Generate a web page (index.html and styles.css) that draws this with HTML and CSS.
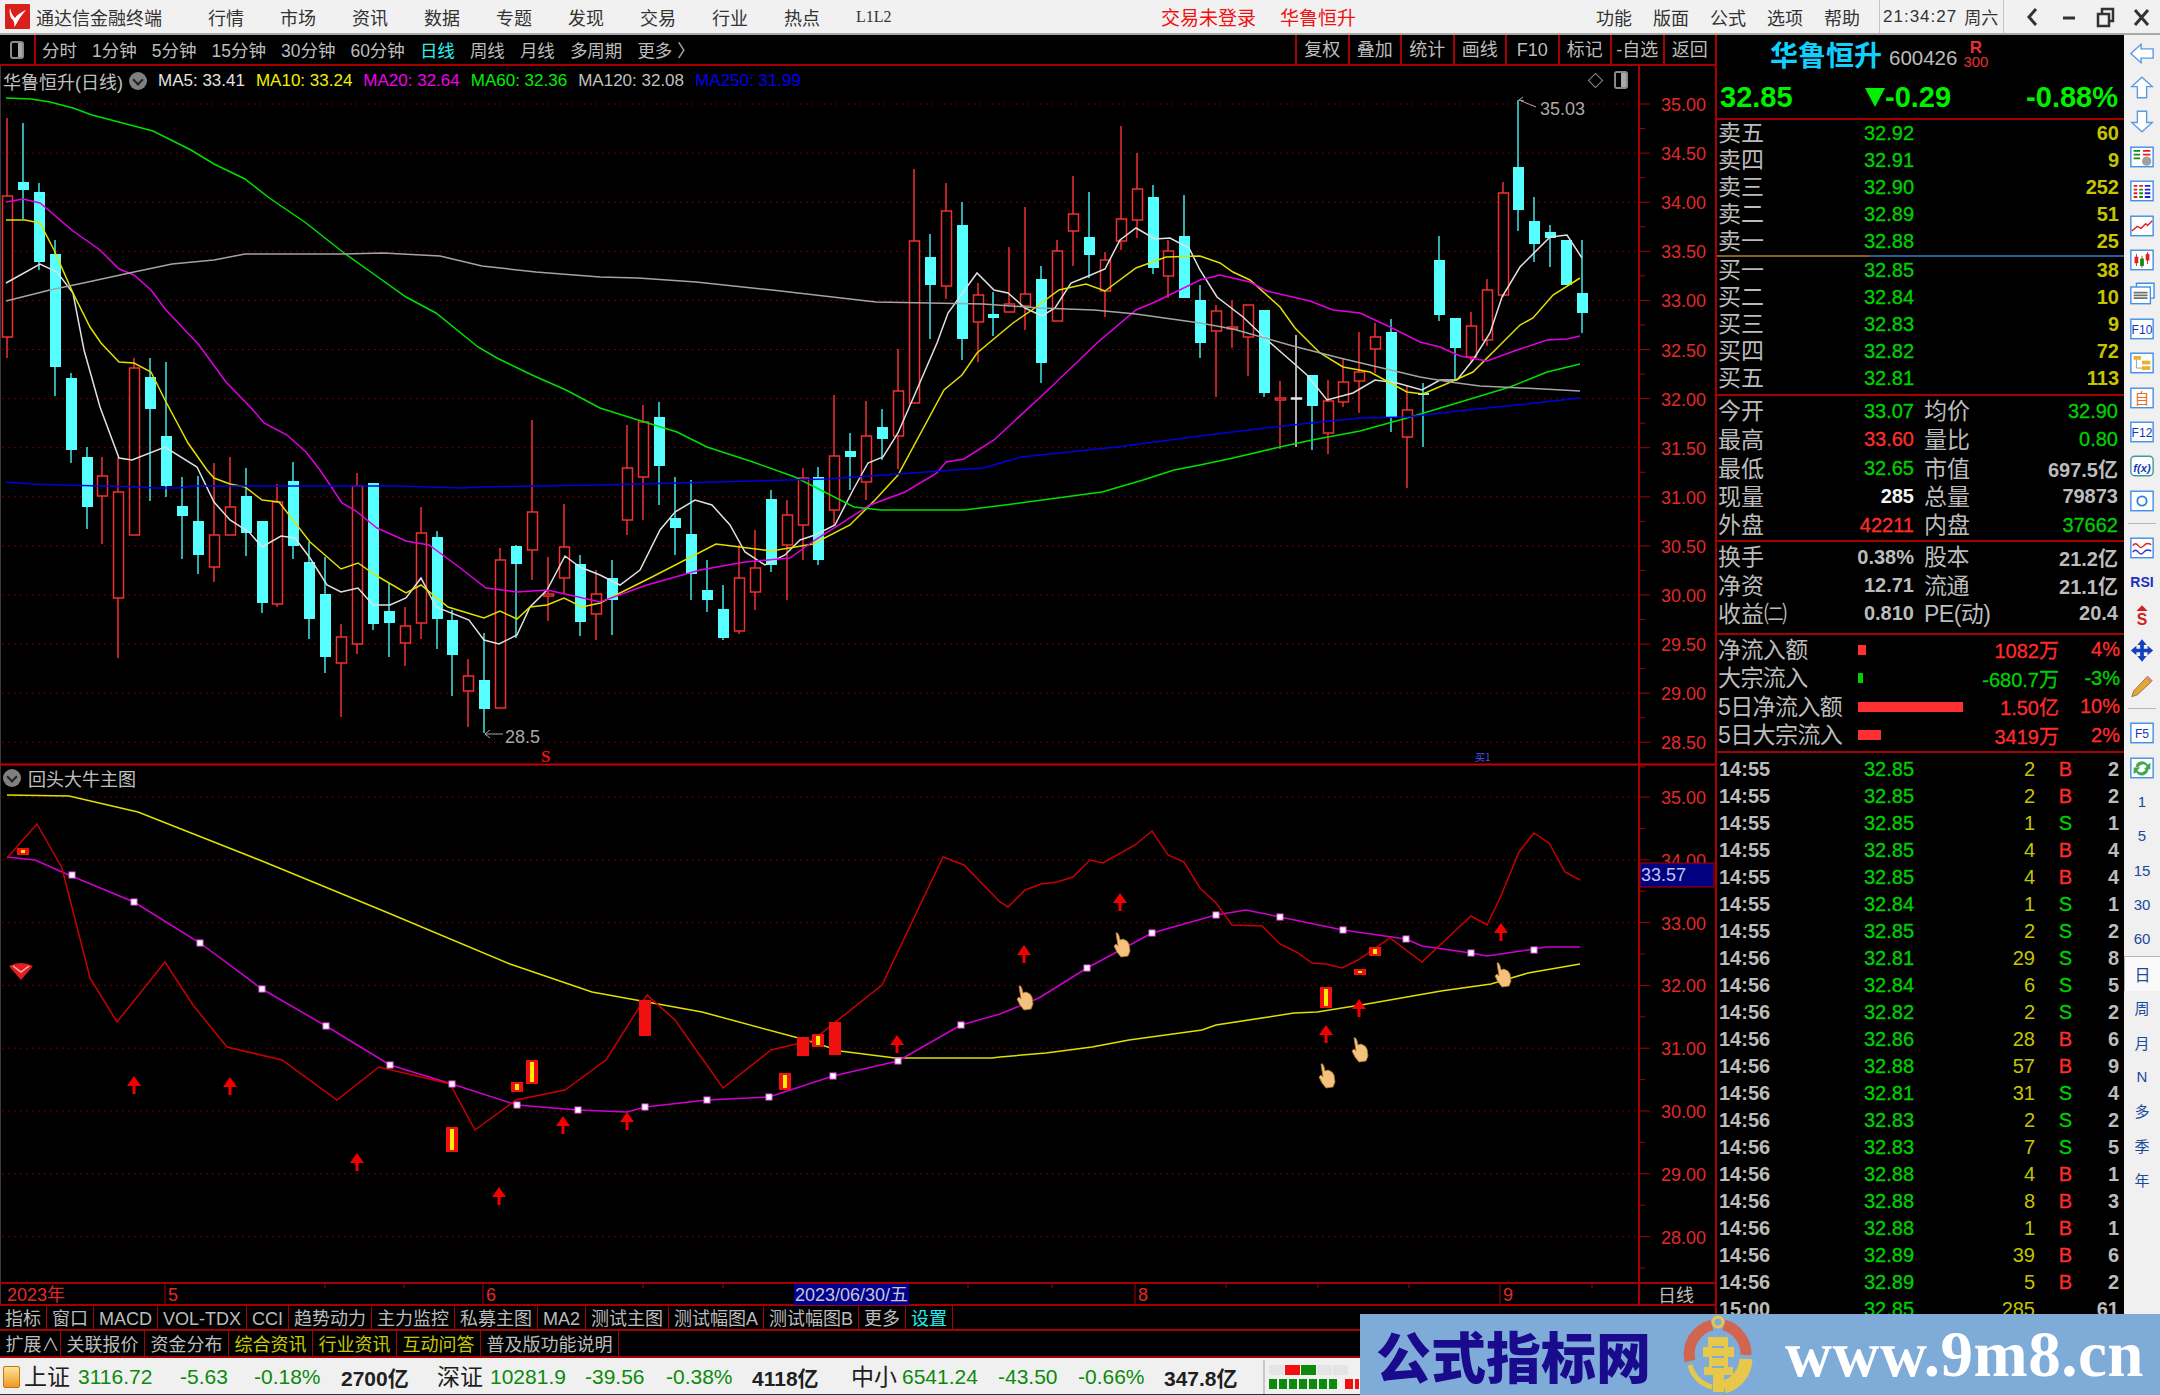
FILE: index.html
```html
<!DOCTYPE html>
<html lang="zh-CN">
<head>
  <meta charset="utf-8"/>
  <title>通达信金融终端</title>
  <link rel="stylesheet" href="styles.css">
</head>
<body>
  <header class="titlebar">
    <svg class="logo" viewBox="0 0 25 25"><rect width="25" height="25" rx="1" fill="#d8201c"/><path d="M5 4 C6 9 8 12 10 14 C12 11 16 8 21 6 C18 10 15 13 13 17 C12 19 11 21 9 23 C10 19 9 17 6 14 C5 11 4 8 5 4 Z" fill="#fff"/></svg>
    <div class="app-name">通达信金融终端</div>
    <nav class="menu">
      <a>行情</a><a>市场</a><a>资讯</a><a>数据</a><a>专题</a><a>发现</a><a>交易</a><a>行业</a><a>热点</a><a class="menu-l2">L1L2</a>
    </nav>
    <div class="login-state"><span>交易未登录</span><span>华鲁恒升</span></div>
    <nav class="menu-right">
      <a>功能</a><a>版面</a><a>公式</a><a>选项</a><a>帮助</a>
    </nav>
    <div class="clock"><span>21:34:27</span><span>周六</span></div>
    <div class="win-buttons">
      <svg viewBox="0 0 36 24"><path d="M21 4 L14 12 L21 20" class="win-stroke"/></svg>
      <svg viewBox="0 0 36 24"><path d="M12 13 H24" class="win-stroke"/></svg>
      <svg viewBox="0 0 36 24"><path d="M11 9 H22 V21 H11 Z M15 9 V4 H26 V16 H22" class="win-stroke thin"/></svg>
      <svg viewBox="0 0 36 24"><path d="M12 5 L25 20 M25 5 L12 20" class="win-stroke"/></svg>
    </div>
  </header>

  <div class="workspace">
    <section class="chart-col">
      <div class="toolbar">
        <div class="tool-toggle"><span class="toggle-icon"></span></div>
        <div class="periods">
          <a>分时</a><a>1分钟</a><a>5分钟</a><a>15分钟</a><a>30分钟</a><a>60分钟</a><a class="cur">日线</a><a>周线</a><a>月线</a><a>多周期</a><a>更多 〉</a>
        </div>
        <div class="tool-cells">
          <a>复权</a><a>叠加</a><a>统计</a><a>画线</a><a>F10</a><a>标记</a><a>-自选</a><a>返回</a>
        </div>
      </div>

      <div class="chart-wrap">
        <svg id="chart" class="chart" viewBox="0 66 1715 1240" width="1715" height="1240"></svg>
        <div class="legend">
          <span class="legend-name">华鲁恒升(日线)</span>
          <span class="round-btn"></span>
          <span class="ma5">MA5: 33.41</span>
          <span class="ma10">MA10: 33.24</span>
          <span class="ma20">MA20: 32.64</span>
          <span class="ma60">MA60: 32.36</span>
          <span class="ma120">MA120: 32.08</span>
          <span class="ma250">MA250: 31.99</span>
        </div>
        <div class="corner-btns"><span class="diamond"></span><span class="toggle-icon"></span></div>
        <div class="sub-legend"><span class="round-btn"></span><span>回头大牛主图</span></div>
      </div>

      <div class="tabs">
        <a>指标</a><a>窗口</a><a>MACD</a><a>VOL-TDX</a><a>CCI</a><a>趋势动力</a><a>主力监控</a><a>私募主图</a><a>MA2</a><a>测试主图</a><a>测试幅图A</a><a>测试幅图B</a><a>更多</a><a class="cyan">设置</a>
      </div>
      <div class="tabs tabs-two">
        <a class="tab-expand">扩展∧</a><a>关联报价</a><a>资金分布</a><a class="olive">综合资讯</a><a class="olive">行业资讯</a><a class="olive">互动问答</a><a>普及版功能说明</a>
      </div>
    </section>

    <aside class="quote">
      <div class="stock-head">
        <span class="stock-name">华鲁恒升</span>
        <span class="stock-code">600426</span>
        <span class="stock-tag"><b>R</b><i>300</i></span>
      </div>
      <div class="stock-price">
        <span class="last">32.85</span>
        <span class="down-tri"></span>
        <span class="chg">-0.29</span>
        <span class="pct">-0.88%</span>
      </div>

      <div class="book">
        <div class="row"><span>卖五</span><span class="up">32.92</span><span class="vol">60</span></div>
        <div class="row"><span>卖四</span><span class="up">32.91</span><span class="vol">9</span></div>
        <div class="row"><span>卖三</span><span class="up">32.90</span><span class="vol">252</span></div>
        <div class="row"><span>卖二</span><span class="up">32.89</span><span class="vol">51</span></div>
        <div class="row"><span>卖一</span><span class="up">32.88</span><span class="vol">25</span></div>
      </div>
      <div class="book-split"></div>
      <div class="book book-buy">
        <div class="row"><span>买一</span><span class="up">32.85</span><span class="vol">38</span></div>
        <div class="row"><span>买二</span><span class="up">32.84</span><span class="vol">10</span></div>
        <div class="row"><span>买三</span><span class="up">32.83</span><span class="vol">9</span></div>
        <div class="row"><span>买四</span><span class="up">32.82</span><span class="vol">72</span></div>
        <div class="row"><span>买五</span><span class="up">32.81</span><span class="vol">113</span></div>
      </div>

      <div class="stats">
        <div class="stat"><span>今开</span><span class="up">33.07</span><span>均价</span><span class="up">32.90</span></div>
        <div class="stat"><span>最高</span><span class="red">33.60</span><span>量比</span><span class="up">0.80</span></div>
        <div class="stat"><span>最低</span><span class="up">32.65</span><span>市值</span><span class="gray">697.5亿</span></div>
        <div class="stat"><span>现量</span><span class="white">285</span><span>总量</span><span class="gray">79873</span></div>
        <div class="stat"><span>外盘</span><span class="red">42211</span><span>内盘</span><span class="up">37662</span></div>
      </div>
      <div class="stats stats-two">
        <div class="stat"><span>换手</span><span class="gray">0.38%</span><span>股本</span><span class="gray">21.2亿</span></div>
        <div class="stat"><span>净资</span><span class="gray">12.71</span><span>流通</span><span class="gray">21.1亿</span></div>
        <div class="stat"><span>收益㈡</span><span class="gray">0.810</span><span>PE(动)</span><span class="gray">20.4</span></div>
      </div>

      <div class="flows">
        <div class="flow"><span>净流入额</span><span class="flow-bar"><i class="bar-red bar-a"></i></span><span class="red">1082万</span><span class="red">4%</span></div>
        <div class="flow"><span>大宗流入</span><span class="flow-bar"><i class="bar-green"></i></span><span class="up">-680.7万</span><span class="up">-3%</span></div>
        <div class="flow"><span>5日净流入额</span><span class="flow-bar"><i class="bar-red bar-c"></i></span><span class="red">1.50亿</span><span class="red">10%</span></div>
        <div class="flow"><span>5日大宗流入</span><span class="flow-bar"><i class="bar-red bar-d"></i></span><span class="red">3419万</span><span class="red">2%</span></div>
      </div>

      <div class="trades">
        <div class="trade"><span>14:55</span><span class="up">32.85</span><span class="vol">2</span><span class="red">B</span><span>2</span></div>
        <div class="trade"><span>14:55</span><span class="up">32.85</span><span class="vol">2</span><span class="red">B</span><span>2</span></div>
        <div class="trade"><span>14:55</span><span class="up">32.85</span><span class="vol">1</span><span class="up">S</span><span>1</span></div>
        <div class="trade"><span>14:55</span><span class="up">32.85</span><span class="vol">4</span><span class="red">B</span><span>4</span></div>
        <div class="trade"><span>14:55</span><span class="up">32.85</span><span class="vol">4</span><span class="red">B</span><span>4</span></div>
        <div class="trade"><span>14:55</span><span class="up">32.84</span><span class="vol">1</span><span class="up">S</span><span>1</span></div>
        <div class="trade"><span>14:55</span><span class="up">32.85</span><span class="vol">2</span><span class="up">S</span><span>2</span></div>
        <div class="trade"><span>14:56</span><span class="up">32.81</span><span class="vol">29</span><span class="up">S</span><span>8</span></div>
        <div class="trade"><span>14:56</span><span class="up">32.84</span><span class="vol">6</span><span class="up">S</span><span>5</span></div>
        <div class="trade"><span>14:56</span><span class="up">32.82</span><span class="vol">2</span><span class="up">S</span><span>2</span></div>
        <div class="trade"><span>14:56</span><span class="up">32.86</span><span class="vol">28</span><span class="red">B</span><span>6</span></div>
        <div class="trade"><span>14:56</span><span class="up">32.88</span><span class="vol">57</span><span class="red">B</span><span>9</span></div>
        <div class="trade"><span>14:56</span><span class="up">32.81</span><span class="vol">31</span><span class="up">S</span><span>4</span></div>
        <div class="trade"><span>14:56</span><span class="up">32.83</span><span class="vol">2</span><span class="up">S</span><span>2</span></div>
        <div class="trade"><span>14:56</span><span class="up">32.83</span><span class="vol">7</span><span class="up">S</span><span>5</span></div>
        <div class="trade"><span>14:56</span><span class="up">32.88</span><span class="vol">4</span><span class="red">B</span><span>1</span></div>
        <div class="trade"><span>14:56</span><span class="up">32.88</span><span class="vol">8</span><span class="red">B</span><span>3</span></div>
        <div class="trade"><span>14:56</span><span class="up">32.88</span><span class="vol">1</span><span class="red">B</span><span>1</span></div>
        <div class="trade"><span>14:56</span><span class="up">32.89</span><span class="vol">39</span><span class="red">B</span><span>6</span></div>
        <div class="trade"><span>14:56</span><span class="up">32.89</span><span class="vol">5</span><span class="red">B</span><span>2</span></div>
        <div class="trade"><span>15:00</span><span class="up">32.85</span><span class="vol">285</span><span></span><span>61</span></div>
      </div>
    </aside>

    <aside class="sidebar">
      <a><svg viewBox="0 0 28 26"><path class="ic-arrow" d="M2 13 L13 3 V8 H26 V18 H13 V23 Z"/></svg></a>
      <a><svg viewBox="0 0 28 26"><path class="ic-arrow" d="M14 2 L25 12 H19 V24 H9 V12 H3 Z"/></svg></a>
      <a><svg viewBox="0 0 28 26"><path class="ic-arrow" d="M14 24 L25 14 H19 V2 H9 V14 H3 Z"/></svg></a>
      <a><svg viewBox="0 0 28 26"><rect class="ic-box" x="2" y="3" width="24" height="21"/><path d="M5 7 H12 M5 11 H12 M5 15 H12" stroke="#108a10" stroke-width="2"/><path d="M15 7 H23 M15 11 H23" stroke="#e02020" stroke-width="2"/><circle cx="19" cy="18" r="5" fill="#a0a0a0"/></svg></a>
      <a><svg viewBox="0 0 28 26"><rect class="ic-box" x="2" y="3" width="24" height="21"/><path d="M5 8 H9 M11 8 H15 M5 12 H9 M5 16 H9 M5 20 H9" stroke="#e02020" stroke-width="2"/><path d="M11 12 H15 M11 16 H15 M11 20 H15" stroke="#108a10" stroke-width="2"/><path d="M17 8 H23 M17 12 H23 M17 16 H23 M17 20 H23" stroke="#2020d0" stroke-width="2"/></svg></a>
      <a><svg viewBox="0 0 28 26"><rect class="ic-box" x="2" y="3" width="24" height="21"/><path d="M3 19 L9 14 L13 16 L18 11 L20 13 L25 8" fill="none" stroke="#e02020" stroke-width="1.5"/></svg></a>
      <a><svg viewBox="0 0 28 26"><rect class="ic-box" x="2" y="3" width="24" height="21"/><path d="M8 7 V20 M14 9 V22 M20 5 V18" stroke="#d02020"/><rect x="6" y="10" width="4" height="7" fill="#e02020"/><rect x="12" y="12" width="4" height="8" fill="#108a10"/><rect x="18" y="7" width="4" height="7" fill="#e02020"/></svg></a>
      <a><svg viewBox="0 0 28 26"><path class="ic-box" d="M8 6 V2 H27 V18 H23"/><rect class="ic-box" x="2" y="6" width="21" height="18"/><path d="M5 12 H20 M5 15 H20 M5 18 H20" stroke="#707070" stroke-width="2"/></svg></a>
      <a><svg viewBox="0 0 28 26"><rect class="ic-box" x="2" y="3" width="24" height="21"/><text class="ic-text" x="14" y="19">F10</text></svg></a>
      <a><svg viewBox="0 0 28 26"><rect class="ic-box" x="2" y="3" width="24" height="21"/><path d="M8 9 V19 H14" fill="none" stroke="#999"/><rect x="5" y="6" width="8" height="4" fill="#e8b030"/><rect x="14" y="11" width="9" height="4" fill="#e8b030"/><rect x="14" y="17" width="9" height="4" fill="#e8b030"/></svg></a>
      <a><svg viewBox="0 0 28 26"><rect class="ic-box" x="2" y="3" width="24" height="21"/><text class="ic-text ic-orange" x="14" y="20">自</text></svg></a>
      <a><svg viewBox="0 0 28 26"><rect class="ic-box" x="2" y="3" width="24" height="21"/><text class="ic-text" x="14" y="19">F12</text></svg></a>
      <a><svg viewBox="0 0 28 26"><rect class="ic-box ic-teal" x="2" y="3" width="24" height="21" rx="4"/><text class="ic-text ic-fx" x="14" y="20">f(x)</text></svg></a>
      <a><svg viewBox="0 0 28 26"><rect class="ic-box" x="2" y="3" width="24" height="21"/><circle cx="14" cy="13.500" r="5" fill="none" stroke="#2f80e0" stroke-width="2"/></svg></a>
      <hr class="side-sep">
      <a><svg viewBox="0 0 28 26"><rect class="ic-box" x="2" y="3" width="24" height="21"/><path d="M4 11 Q7 7 10 11 T16 11 T24 10" fill="none" stroke="#e02020" stroke-width="1.500"/><path d="M4 18 Q7 14 10 18 T16 18 T24 17" fill="none" stroke="#3030d0" stroke-width="1.500"/></svg></a>
      <a class="side-rsi">RSI</a>
      <a><svg viewBox="0 0 28 26"><path d="M14 1 L20 7 H8 Z" fill="#d02020"/><text class="ic-text ic-s" x="14" y="22">S</text></svg></a>
      <a><svg viewBox="0 0 28 26"><path d="M14 1 L19 7 H16 V11 H20 V8 L26 13 L20 18 V15 H16 V19 H19 L14 25 L9 19 H12 V15 H8 V18 L2 13 L8 8 V11 H12 V7 H9 Z" fill="#1440c0"/></svg></a>
      <a><svg viewBox="0 0 28 26"><path d="M20 3 L25 8 L9 23 L3 25 L5 19 Z" fill="#e8a830" stroke="#887050"/><path d="M20 3 L25 8 L23 10 L18 5 Z" fill="#e88080"/></svg></a>
      <hr class="side-sep">
      <a><svg viewBox="0 0 28 26"><rect class="ic-box" x="2" y="3" width="24" height="21"/><text class="ic-text" x="14" y="19">F5</text></svg></a>
      <a><svg viewBox="0 0 28 26"><rect class="ic-box" x="2" y="3" width="24" height="21"/><path d="M7 12 A7 7 0 0 1 20 10 L23 8 V15 H16 L19 12 A5 5 0 0 0 10 13 Z M21 15 A7 7 0 0 1 8 18 L5 20 V13 H12 L9 16 A5 5 0 0 0 18 15 Z" fill="#40a850"/></svg></a>
      <a class="side-txt">1</a><a class="side-txt">5</a><a class="side-txt">15</a><a class="side-txt">30</a><a class="side-txt">60</a>
      <a class="side-txt side-cur">日</a><a class="side-txt">周</a><a class="side-txt">月</a><a class="side-txt">N</a><a class="side-txt">多</a><a class="side-txt">季</a><a class="side-txt">年</a>
    </aside>
  </div>

  <footer class="status">
    <span class="status-icon"></span>
    <span class="k">上证</span><span class="g">3116.72</span><span class="g">-5.63</span><span class="g">-0.18%</span><span class="b">2700亿</span>
    <span class="k">深证</span><span class="g">10281.9</span><span class="g">-39.56</span><span class="g">-0.38%</span><span class="b">4118亿</span>
    <span class="k">中小</span><span class="g">6541.24</span><span class="g">-43.50</span><span class="g">-0.66%</span><span class="b">347.8亿</span>
    <span class="meter">
      <span class="meter-top"><i></i><i class="m-red"></i><i class="m-green"></i><i></i><i></i></span>
      <span class="meter-low"><i class="m-dash"></i><i class="m-dash-red"></i></span>
    </span>
  </footer>

  <div class="watermark">
    <span class="wm-cn">公式指标网</span>
    <svg class="wm-logo" viewBox="0 0 80 80">
      <path d="M12 46 A30 30 0 0 1 34 10" fill="none" stroke="#d2654f" stroke-width="11"/>
      <path d="M46 10 A30 30 0 0 1 68 40" fill="none" stroke="#d2654f" stroke-width="11"/>
      <path d="M68 44 A30 30 0 0 1 46 72" fill="none" stroke="#e8c84a" stroke-width="13"/>
      <path d="M12 50 A30 30 0 0 0 34 72" fill="none" stroke="#e8c84a" stroke-width="5"/>
      <circle cx="40" cy="7" r="5" fill="none" stroke="#e8c84a" stroke-width="3"/>
      <path d="M30 22 H50 V32 H56 V42 H50 V52 H55 V60 H46 V77 H35 V60 H26 V52 H31 V42 H25 V32 H30 Z" fill="#e8c84a"/>
      <path d="M34 32 H46 M34 42 H46 M34 52 H46" stroke="#7fabd8" stroke-width="2"/>
    </svg>
    <span class="wm-url">www.9m8.cn</span>
  </div>

  <script src="script.js"></script>
</body>
</html>
```
FILE: styles.css
```css
* {
  margin: 0;
  padding: 0;
  box-sizing: border-box;
}

:root {
  --line: #a80000;
  --gray: #bcbcbc;
  --sans: "Liberation Sans", "Noto Sans CJK SC", sans-serif;
  --cjk: "Noto Sans CJK SC", "Liberation Sans", sans-serif;
}

body {
  width: 2160px;
  height: 1395px;
  position: relative;
  overflow: hidden;
  background: #000;
  font-family: var(--sans);
  display: flex;
  flex-direction: column;
}

/* barre de titre */
.titlebar {
  height: 35px;
  display: flex;
  align-items: center;
  background: #f1f1f1;
  border-bottom: 2px solid #a8a8a8;
  color: #333;
  font-size: 18px;
  flex: none;
}

.logo {
  width: 25px;
  height: 25px;
  margin-left: 5px;
}

.app-name {
  margin-left: 6px;
  width: 172px;
  white-space: nowrap;
}

.menu {
  display: flex;
  align-items: center;
  gap: 36px;
  width: 900px;
}

.menu a {
  width: 36px;
  white-space: nowrap;
}

.menu-l2 {
  font-size: 16px;
  font-family: "Liberation Serif", serif;
}

.login-state {
  display: flex;
  gap: 24px;
  width: 435px;
  margin-left: 53px;
  font-size: 19px;
  color: #f01010;
}

.menu-right {
  display: flex;
  gap: 21px;
  width: 283px;
}

.clock {
  height: 33px;
  width: 125px;
  padding-left: 3px;
  display: flex;
  align-items: center;
  gap: 7px;
  border-left: 1px solid #c4c4c4;
  border-right: 1px solid #c4c4c4;
  white-space: nowrap;
  font-size: 17px;
}

.clock span:first-child {
  letter-spacing: 1px;
}

.win-buttons {
  display: flex;
  margin-left: 11px;
}

.win-buttons svg {
  width: 36px;
  height: 24px;
}

.win-stroke {
  fill: none;
  stroke: #333;
  stroke-width: 3;
}

.win-stroke.thin {
  stroke-width: 2.5;
}

.workspace {
  flex: 1;
  display: flex;
  min-height: 0;
}

.chart-col {
  width: 1715px;
  display: flex;
  flex-direction: column;
  flex: none;
}

/* toolbar */
.toolbar {
  height: 31px;
  display: flex;
  color: var(--gray);
  font-size: 17.5px;
  border-bottom: 2px solid var(--line);
  flex: none;
}

.tool-toggle {
  width: 36px;
  display: flex;
  align-items: center;
  justify-content: center;
  border-right: 2px solid var(--line);
}

.toggle-icon {
  display: block;
  width: 14px;
  height: 18px;
  border: 2px solid #8a8a8a;
  border-radius: 3px;
  background: linear-gradient(to right, #000 55%, #a8a8a8 55%);
}

.periods {
  display: flex;
  align-items: center;
  gap: 15px;
  margin-left: 6px;
  white-space: nowrap;
}

.periods .cur {
  color: #30f0f0;
}

.tool-cells {
  margin-left: auto;
  display: flex;
}

.tool-cells a {
  width: 52.5px;
  text-align: center;
  font-size: 18px;
  line-height: 30px;
  border-left: 2px solid var(--line);
  white-space: nowrap;
}

.chart-wrap {
  position: relative;
  height: 1240px;
  flex: none;
}

.chart {
  display: block;
}

.legend {
  position: absolute;
  top: 2px;
  left: 3px;
  display: flex;
  align-items: center;
  gap: 11px;
  font-size: 17px;
  white-space: nowrap;
  color: #c0c0c0;
}

.legend-name {
  font-size: 18px;
  margin-right: -5px;
}

.round-btn {
  display: block;
  width: 18px;
  height: 18px;
  border-radius: 50%;
  background: #808080;
  position: relative;
}

.round-btn::after {
  content: "";
  position: absolute;
  left: 5px;
  top: 4px;
  width: 6px;
  height: 6px;
  border-right: 2px solid #222;
  border-bottom: 2px solid #222;
  transform: rotate(45deg);
}

.ma5 { color: #e4e4e4; }
.ma10 { color: #f0f000; }
.ma20 { color: #f000f0; }
.ma60 { color: #00f000; }
.ma120 { color: #c0c0c0; }
.ma250 { color: #0000f0; }

.corner-btns {
  position: absolute;
  top: 5px;
  left: 1590px;
  display: flex;
  align-items: center;
  gap: 13px;
}

.diamond {
  display: block;
  width: 11px;
  height: 11px;
  border: 1px solid #8a8a8a;
  transform: rotate(45deg);
}

.sub-legend {
  position: absolute;
  top: 699px;
  left: 3px;
  display: flex;
  align-items: center;
  gap: 7px;
  color: #c0c0c0;
  font-size: 18px;
}

/* onglets du bas */
.tabs {
  height: 25px;
  display: flex;
  border-bottom: 2px solid var(--line);
  font-size: 18px;
  line-height: 27px;
  color: var(--gray);
  flex: none;
}

.tabs a {
  padding: 0 5px;
  border-right: 1.5px solid var(--line);
  white-space: nowrap;
}

.tabs-two {
  height: 27px;
  line-height: 29px;
}

.tabs-two a {
  padding: 0 5.5px;
}

.tabs-two .tab-expand {
  width: 61px;
  overflow: hidden;
}

.tabs .cyan { color: #20f0f0; }
.tabs .olive { color: #c8c800; }

/* panneau quote */
.quote {
  width: 409px;
  flex: none;
  border-left: 2px solid var(--line);
  color: var(--gray);
  overflow: hidden;
  font-size: 20px;
}

.stock-head {
  height: 41px;
  display: flex;
  align-items: center;
  padding-left: 53px;
  gap: 7px;
}

.stock-name {
  color: #10d0ff;
  font: bold 28px var(--cjk);
  line-height: 30px;
  margin-top: -3px;
}

.stock-code {
  font-size: 20.5px;
  margin-top: 5px;
}

.stock-tag {
  display: flex;
  flex-direction: column;
  align-items: center;
  color: #e83030;
  line-height: 14px;
  margin-left: -1px;
  margin-top: -2px;
}

.stock-tag b {
  font-size: 17px;
}

.stock-tag i {
  font-style: normal;
  font-size: 15px;
}

.stock-price {
  height: 44px;
  display: flex;
  align-items: center;
  padding-left: 3px;
  padding-right: 6px;
  border-bottom: 2px solid var(--line);
  color: #00f000;
  font: bold 29px var(--sans);
}

.last {
  width: 145px;
}

.down-tri {
  width: 0;
  height: 0;
  border-left: 10px solid transparent;
  border-right: 10px solid transparent;
  border-top: 19px solid #00f000;
}

.pct {
  margin-left: auto;
}

.up { color: #00d000; -webkit-text-stroke: 0.3px; }
.red { color: #ff2c2c; -webkit-text-stroke: 0.3px; }
.white { color: #f4f4f4; font-weight: bold; }
.gray { color: #bcbcbc; font-weight: bold; }
.vol { color: #c4c400; }

.book {
  font-size: 20px;
}

.row {
  height: 27px;
  display: grid;
  grid-template-columns: 146px 52px 1fr;
  align-items: center;
  padding: 0 5px 0 1px;
}

.row > span:first-child {
  font-size: 23px;
  line-height: 27px;
}

.row .vol {
  text-align: right;
  font-weight: bold;
}

.book-split {
  height: 2px;
  background: linear-gradient(to right, #8a6020 152px, #2a6090 152px);
}

.book-buy {
  border-bottom: 2px solid var(--line);
  padding-bottom: 2px;
}

.stats {
  padding-top: 1px;
}

.stat {
  height: 28.5px;
  display: grid;
  grid-template-columns: 1px 139px 57px 10px 62px 1fr;
  align-items: center;
  padding-right: 6px;
}

.stat::before {
  content: "";
}

.stat > span:nth-child(1),
.stat > span:nth-child(3) {
  font-size: 23px;
  line-height: 28px;
  white-space: nowrap;
}

.stat > span:nth-child(2) {
  grid-column: 3;
  text-align: right;
  white-space: nowrap;
  direction: rtl;
  unicode-bidi: plaintext;
}

.stat > span:nth-child(1) { grid-column: 2; }
.stat > span:nth-child(3) { grid-column: 5; }
.stat > span:nth-child(4) {
  grid-column: 6;
  text-align: right;
  white-space: nowrap;
}

.stats-two {
  border-top: 2px solid var(--line);
  padding-bottom: 5px;
}

.stats-two .stat > span:nth-child(3) {
  letter-spacing: -0.5px;
}

.flows {
  border-top: 2px solid var(--line);
  border-bottom: 2px solid var(--line);
  padding-bottom: 2px;
}

.flow {
  height: 28.6px;
  display: grid;
  grid-template-columns: 140px 120px 81px 1fr;
  align-items: center;
  padding: 0 4px 0 1px;
}

.flow > span:first-child {
  font-size: 23px;
  line-height: 28px;
  white-space: nowrap;
  letter-spacing: -0.6px;
}

.flow > span:nth-child(3),
.flow > span:nth-child(4) {
  text-align: right;
  white-space: nowrap;
}

.flow-bar {
  display: flex;
  align-items: center;
}

.flow-bar i {
  display: block;
  height: 10px;
}

.bar-red { background: #ff3030; }
.bar-green { width: 5px; background: #00d000; }
.bar-a { width: 8px; }
.bar-c { width: 105px; }
.bar-d { width: 23px; }

.trades {
  padding-top: 3px;
}

.trade {
  height: 27px;
  display: grid;
  grid-template-columns: 145px 52px 119px 37px 1fr;
  align-items: center;
  padding: 0 5px 0 2px;
  font-weight: 400;
}

.trade > span:first-child,
.trade > span:last-child {
  font-weight: bold;
}

.trade .vol {
  text-align: right;
}

.trade > span:nth-child(4) {
  text-align: right;
}

.trade > span:last-child {
  text-align: right;
}

/* barre d'outils droite */
.sidebar {
  flex: 1;
  background: #f0f0f0;
  padding-top: 1px;
  display: flex;
  flex-direction: column;
  align-items: center;
  overflow: hidden;
}

.sidebar > a {
  height: 34.4px;
  width: 100%;
  display: flex;
  align-items: center;
  justify-content: center;
  flex: none;
}

.sidebar svg {
  width: 26px;
  height: 25px;
}

.side-sep {
  width: 28px;
  border: none;
  border-top: 1.5px solid #b8b8b8;
  margin: 6px 0;
  flex: none;
}

.ic-arrow {
  fill: #fff;
  stroke: #5a9ae6;
  stroke-width: 1.5;
}

.ic-box {
  fill: #fff;
  stroke: #3f8fe8;
  stroke-width: 1.5;
}

.ic-teal {
  stroke: #3a9a9a;
}

.ic-text {
  font: 13px var(--sans);
  fill: #1438b8;
  text-anchor: middle;
}

.ic-orange {
  fill: #e87020;
  font: 16px var(--cjk);
}

.ic-fx {
  font: italic bold 12px var(--sans);
}

.ic-s {
  fill: #d02020;
  font: bold 17px var(--sans);
}

.side-rsi {
  color: #2030c0;
  font-size: 14px;
  font-weight: bold;
}

.side-txt {
  color: #1a4a9a;
  font-size: 15px;
}

.side-cur {
  background: #fafafa;
  border-top: 1.5px solid #b8b8b8;
  border-left: 1.5px solid #b8b8b8;
  font-size: 16px;
}

/* bas de page */
.status {
  height: 37px;
  flex: none;
  padding-top: 2px;
  background: #f0f0f0;
  border-bottom: 1px solid #203040;
  display: grid;
  grid-template-columns: 24px 54px 102px 74px 87px 96px 53px 95px 81px 86px 99px 51px 96px 80px 86px 99px 100px;
  align-items: center;
  font-size: 21px;
  color: #202020;
  white-space: nowrap;
}

.status-icon {
  display: block;
  width: 17px;
  height: 22px;
  margin-left: 3px;
  background: linear-gradient(#fbe39a, #f09a20);
  border: 1px solid #c07810;
  border-radius: 2px;
}

.status .k {
  font-size: 23px;
  line-height: 28px;
}

.status .g {
  color: #0b8a0b;
}

.status .b {
  font-weight: bold;
}

.meter {
  border-left: 2px solid #c8c8c8;
  height: 34px;
  padding: 5px 0 0 4px;
  display: flex;
  flex-direction: column;
  gap: 4px;
}

.meter-top {
  display: flex;
  gap: 1px;
}

.meter-top i {
  width: 15px;
  height: 10px;
  background: #e4e4e4;
}

.meter-top .m-red { background: #f01010; }
.meter-top .m-green { background: #0b8a0b; }

.meter-low {
  display: flex;
  gap: 6px;
}

.meter-low i {
  display: block;
  height: 10px;
}

.m-dash {
  width: 70px;
  background: repeating-linear-gradient(to right, #0b8a0b 0 8px, transparent 8px 10px);
}

.m-dash-red {
  width: 14px;
  background: repeating-linear-gradient(to right, #f01010 0 8px, transparent 8px 10px);
}

.watermark {
  position: absolute;
  left: 1360px;
  top: 1314px;
  width: 800px;
  height: 81px;
  background: #7fabd8;
  display: flex;
  align-items: center;
  overflow: hidden;
}

.wm-cn {
  margin-left: 16px;
  font: 900 55px/81px var(--cjk);
  color: #1a0a8c;
  white-space: nowrap;
}

.wm-logo {
  width: 80px;
  height: 80px;
  margin-left: 27px;
}

.wm-url {
  margin-left: 27px;
  font: bold 65px/81px "Liberation Serif", serif;
  color: #fff;
  white-space: nowrap;
  letter-spacing: 0.5px;
}

/* textes du graphique */
.ax {
  font-size: 18px;
  fill: #e02a2a;
}

.note {
  font-size: 18px;
  fill: #a8a8a8;
}

.date-lbl {
  font-size: 18px;
  fill: #e02a2a;
}

.date-cur {
  font-size: 18px;
  fill: #c8c8c8;
}

.day-lbl {
  font-size: 18px;
  fill: #bcbcbc;
}

.box-lbl {
  font-size: 18px;
  fill: #c0c8f0;
}
```
FILE: script.js
```js
// candles: hi, top, bottom, lo, type (r = up, c = down, w = flat white)
const candles = [
  [118,196,337,358,'r'],[123,182,190,219,'c'],[183,192,262,270,'c'],[240,254,367,396,'c'],[373,378,450,463,'c'],
  [447,457,507,529,'c'],[457,476,496,544,'r'],[457,492,598,658,'r'],[358,368,535,535,'r'],[358,377,409,501,'c'],
  [362,436,486,497,'c'],[477,506,516,559,'c'],[476,521,555,574,'c'],[463,535,567,582,'r'],[457,507,535,535,'r'],
  [468,496,533,556,'c'],[521,521,603,613,'c'],[484,502,604,607,'r'],[462,481,546,559,'c'],[542,562,619,639,'c'],
  [557,594,657,673,'c'],[624,637,663,717,'r'],[473,486,644,654,'r'],[483,483,624,630,'c'],[583,611,623,657,'c'],
  [607,626,643,666,'r'],[507,533,623,639,'r'],[531,537,619,649,'c'],[610,620,655,696,'c'],[659,676,691,727,'r'],
  [633,680,709,733,'c'],[548,560,708,708,'r'],[545,546,564,638,'c'],[420,512,550,580,'r'],[557,594,596,621,'r'],
  [504,547,578,594,'r'],[555,564,622,636,'c'],[570,594,614,640,'r'],[560,578,600,635,'c'],[425,468,520,535,'r'],
  [405,422,477,520,'r'],[402,417,466,505,'c'],[477,518,528,555,'c'],[480,534,574,600,'c'],[560,590,600,612,'c'],
  [585,609,638,640,'c'],[545,578,631,634,'r'],[530,568,592,610,'r'],[490,499,565,572,'c'],[500,515,545,600,'r'],
  [468,478,525,560,'r'],[467,477,560,565,'c'],[395,456,510,525,'r'],[433,451,457,490,'c'],[401,436,482,500,'r'],
  [409,427,439,460,'c'],[349,391,436,469,'r'],[169,241,403,403,'r'],[234,257,285,339,'c'],[183,211,286,299,'r'],
  [202,225,339,360,'c'],[283,295,322,362,'r'],[292,314,318,336,'c'],[247,304,312,312,'r'],[207,294,306,330,'r'],
  [266,279,363,383,'c'],[240,251,321,321,'r'],[176,214,231,266,'r'],[192,237,255,278,'c'],[252,260,291,317,'r'],
  [126,219,241,250,'r'],[153,189,220,238,'r'],[185,197,268,274,'c'],[240,251,276,298,'r'],[195,236,298,298,'c'],
  [285,300,343,358,'c'],[305,311,331,397,'r'],[300,327,329,348,'r'],[305,305,337,376,'r'],[310,310,393,397,'c'],
  [381,398,400,449,'r'],[335,398,399,447,'w'],[375,375,406,450,'c'],[380,401,433,454,'r'],[358,382,402,407,'r'],
  [332,372,381,413,'r'],[323,337,349,373,'r'],[319,332,417,432,'c'],[385,410,437,488,'r'],[383,393,395,447,'c'],
  [236,260,315,321,'c'],[318,318,348,380,'c'],[312,326,357,362,'r'],[279,290,340,346,'r'],[182,193,295,297,'r'],
  [100,167,210,231,'c'],[197,221,244,262,'c'],[225,232,238,267,'c'],[240,240,285,285,'c'],[240,293,313,333,'c']
];

const ma = [
  ['#e0e0e0', '6,283 40,264 57,272 73,293 84,350 100,407 119,458 132,460 165,447 197,467 214,502 230,520 249,532 262,547 281,536 295,538 310,558 327,585 341,592 358,588 373,605 390,605 406,598 421,578 436,607 469,620 484,640 499,644 517,635 530,607 547,590 565,556 580,567 600,575 620,585 640,570 660,530 675,512 695,500 712,505 730,525 745,552 765,565 785,555 800,540 815,535 835,525 853,490 868,463 883,457 898,433 918,387 937,343 948,313 977,273 994,290 1008,293 1025,308 1042,316 1055,308 1071,283 1086,277 1105,269 1120,240 1136,228 1155,239 1170,238 1189,248 1200,270 1217,297 1243,317 1267,340 1290,360 1307,375 1327,400 1353,393 1375,380 1397,383 1422,390 1440,380 1457,380 1473,360 1490,333 1502,297 1520,267 1550,237 1567,235 1582,258'],
  ['#e0e000', '6,220 25,220 40,223 54,250 73,293 90,327 101,343 119,362 134,363 151,372 165,400 188,443 207,470 214,478 230,484 245,487 262,500 279,502 310,542 341,569 358,563 377,576 406,593 421,585 448,607 484,618 500,611 517,619 530,607 547,605 564,598 582,607 600,603 650,578 716,544 771,551 813,544 850,525 875,500 898,475 944,390 962,375 977,353 1013,323 1032,310 1059,290 1086,284 1105,291 1136,268 1166,257 1200,256 1220,263 1233,272 1250,280 1280,307 1295,328 1320,353 1343,367 1370,372 1407,392 1423,394 1453,381 1473,372 1520,325 1533,318 1553,295 1580,278'],
  ['#e000e0', '6,202 23,199 40,203 73,231 100,250 119,269 134,275 151,290 166,310 199,345 226,382 253,410 264,423 287,435 306,452 320,470 342,503 356,511 377,528 406,541 429,545 459,567 486,588 517,592 547,590 574,596 600,602 647,585 700,570 745,562 790,558 815,540 870,505 905,492 937,473 946,462 964,459 994,440 1048,390 1097,343 1136,310 1155,302 1200,280 1220,275 1250,282 1267,291 1310,301 1333,310 1360,313 1390,327 1420,342 1440,347 1460,356 1487,361 1517,350 1547,340 1567,339 1580,336'],
  ['#00e000', '6,98 31,99 50,102 73,108 92,115 115,121 153,131 191,150 214,164 245,179 268,197 306,223 344,253 375,275 406,297 436,313 478,347 497,358 532,375 566,390 600,408 638,420 677,432 707,447 753,462 795,477 854,507 881,510 964,510 1005,505 1102,492 1143,480 1174,470 1200,465 1233,458 1280,447 1312,440 1360,431 1407,418 1427,412 1467,400 1510,387 1547,372 1580,364'],
  ['#a4a4a4', '6,301 50,290 88,282 134,272 172,264 214,260 245,254 344,254 383,253 440,256 482,266 536,272 600,277 638,278 696,282 772,290 876,302 983,304 1040,308 1094,310 1136,314 1200,323 1233,329 1293,346 1340,358 1420,377 1450,382 1480,386 1543,389 1580,391'],
  ['#0000e0', '6,482 32,484 63,485 142,487 153,488 180,488 191,486 398,486 463,488 478,487 600,485 826,479 898,474 983,468 1021,457 1117,447 1200,436 1257,429 1310,423 1360,418 1407,417 1467,410 1517,405 1580,398']
];

const subLines = [
  ['#e0e000', '7,795 69,796 138,812 262,861 386,912 510,964 592,992 702,1012 806,1040 840,1051 895,1058 992,1058 1000,1057 1046,1053 1092,1047 1129,1040 1202,1030 1216,1025 1294,1013 1317,1012 1367,1004 1441,991 1491,984 1528,973 1580,964'],
  ['#d000d0', '7,857 35,860 69,875 134,902 200,943 262,989 326,1026 390,1065 452,1084 517,1105 578,1110 627,1112 645,1107 707,1100 769,1097 833,1076 898,1061 961,1025 1000,1014 1039,998 1087,968 1152,933 1216,915 1246,910 1280,917 1343,930 1406,939 1422,946 1471,953 1487,956 1534,949 1546,947 1580,947'],
  ['#c80000', '7,858 37,824 62,868 90,978 117,1022 165,962 193,1005 227,1047 282,1060 337,1100 379,1067 450,1084 475,1130 516,1100 565,1090 606,1060 647,995 675,1020 723,1088 771,1050 813,1040 882,985 943,857 964,865 1000,902 1008,907 1025,890 1041,884 1057,882 1073,877 1090,860 1103,863 1135,845 1152,831 1168,855 1184,862 1200,888 1216,903 1232,925 1262,926 1280,944 1298,953 1312,963 1326,964 1342,968 1358,960 1390,938 1422,962 1471,916 1487,925 1500,898 1519,852 1534,833 1549,843 1565,872 1580,880']
];

const squares = [[72,875],[134,902],[200,943],[262,989],[326,1026],[390,1065],[452,1084],[517,1105],[578,1110],[645,1107],[707,1100],[769,1097],[833,1076],[898,1061],[961,1025],[1087,968],[1152,933],[1216,915],[1280,917],[1343,930],[1406,939],[1471,953],[1534,950]];
// x, top, bottom, yellow core
const bars = [[23,848,855,1],[452,1127,1152,1],[517,1082,1092,1],[532,1060,1084,1],[645,1000,1036,0],[785,1073,1090,1],[803,1037,1056,0],[818,1034,1047,1],[835,1022,1055,0],[1326,987,1008,1],[1360,969,975,1],[1375,947,956,1]];
const arrows = [[134,1076],[230,1077],[357,1153],[499,1187],[563,1116],[627,1112],[897,1035],[1024,945],[1120,893],[1326,1025],[1359,999],[1501,923]];
const hands = [[1025,998],[1122,945],[1327,1076],[1360,1050],[1503,975]];

let s = '';

function line(x1, y1, x2, y2, color, w) {
  s += `<line x1="${x1}" y1="${y1}" x2="${x2}" y2="${y2}" stroke="${color}" stroke-width="${w || 1}"/>`;
}

function text(x, y, cls, t) {
  s += `<text x="${x}" y="${y}" class="${cls}">${t}</text>`;
}

// dotted grid and price axis
function axis(y0, step, first, count, delta) {
  for (let k = 0; k < count; k++) {
    const y = y0 + step * k;
    s += `<line x1="2" y1="${y}" x2="1638" y2="${y}" stroke="#8e0000" stroke-dasharray="1.5 4.5"/>`;
    line(1639, y, 1650, y, '#a80000');
    line(1639, y + step / 2, 1645, y + step / 2, '#a80000');
    text(1661, y + 7, 'ax', (first - delta * k).toFixed(2));
  }
}

axis(104, 49.1, 35, 14, 0.5);
axis(797, 62.8, 35, 8, 1);

// candles
candles.forEach((c, i) => {
  const x = Math.round(7 + 15.91 * i);
  const [hi, top, bot, lo, t] = c;
  if (t === 'c') {
    line(x, hi, x, lo, '#40e8e8', 1.5);
    s += `<rect x="${x - 5}" y="${top}" width="11" height="${bot - top}" fill="#55ffff"/>`;
  } else {
    const col = t === 'w' ? '#e8e8e8' : '#f03030';
    line(x, hi, x, top, col, 1.5);
    line(x, bot, x, lo, col, 1.5);
    s += `<rect x="${x - 4.5}" y="${top}" width="10" height="${Math.max(bot - top, 1)}" fill="#000" stroke="${col}" stroke-width="1.5"/>`;
  }
});

ma.concat(subLines).forEach(m => {
  s += `<polyline points="${m[1]}" fill="none" stroke="${m[0]}" stroke-width="1.5"/>`;
});

// extreme labels
s += '<path d="M1519 100 L1536 107 M1519 100 l4 -3 M1519 100 l5 1 M485 734 H503 M485 734 l5 -4 M485 734 l5 4" stroke="#a8a8a8" fill="none"/>';
text(1540, 115, 'note', '35.03');
text(505, 743, 'note', '28.5');
s += '<text x="541" y="762" font-family="Liberation Serif" font-weight="bold" font-size="17" fill="#f01010">S</text>';
s += '<text x="1475" y="761" font-family="Noto Sans CJK SC" font-size="10" fill="#5050f0">买1</text>';

// sub panel markers
bars.forEach(b => {
  s += `<rect x="${b[0] - 6}" y="${b[1]}" width="12" height="${b[2] - b[1]}" fill="#f01010"/>`;
  if (b[3]) s += `<rect x="${b[0] - 2}" y="${b[1] + 2}" width="4" height="${b[2] - b[1] - 4}" fill="#f8f000"/>`;
});
squares.forEach(p => {
  s += `<rect x="${p[0] - 3}" y="${p[1] - 3}" width="6" height="6" fill="#fff" stroke="#f060f0"/>`;
});
arrows.forEach(a => {
  s += `<path d="M${a[0]} ${a[1]} l7 10 h-5.500 v8 h-3 v-8 h-5.500 Z" fill="#f00000"/>`;
});
hands.forEach(h => {
  s += `<path transform="translate(${h[0]} ${h[1]})" d="M-6 -12 C-4 -13 -3 -10 -2 -5 L1 -6 L5 -4 L7 -1 L8 6 L6 11 L-1 12 L-5 7 L-8 1 L-6 -1 L-4 1 Z" fill="#f4c27c" stroke="#b07830" stroke-width="0.800"/>`;
});
s += '<path d="M9 966 Q21 960 33 966 L21 980 Z" fill="#e02020"/><path d="M13 966 L21 972 L29 966" fill="none" stroke="#ffb0b0" stroke-width="1.500"/>';

// panel separators
line(0, 66, 0, 1306, '#3a3a3a', 2);
line(0, 764.500, 1715, 764.500, '#c80000', 2);
line(1639, 66, 1639, 1306, '#a80000', 2);
line(0, 1283, 1715, 1283, '#a80000', 2);
line(0, 1305, 1715, 1305, '#a80000', 2);

// blue current value box
s += '<rect x="1640" y="863" width="74" height="24" fill="#000080" stroke="#b00000"/>';
text(1641, 881, 'box-lbl', '33.57');

// date row
text(7, 1301, 'date-lbl', '2023年');
[[165, '5'], [483, '6'], [1135, '8'], [1500, '9']].forEach(d => {
  line(d[0], 1284, d[0], 1305, '#a80000');
  text(d[0] + 3, 1301, 'date-lbl', d[1]);
});
[325, 404, 643, 723, 968, 1052, 1226, 1318, 1409, 1592].forEach(x => line(x, 1284, x, 1288, '#a80000'));
s += '<rect x="794" y="1284" width="115" height="21" fill="#000090"/>';
text(795, 1301, 'date-cur', '2023/06/30/五');
text(1658, 1302, 'day-lbl', '日线');

document.getElementById('chart').innerHTML = s;
```
